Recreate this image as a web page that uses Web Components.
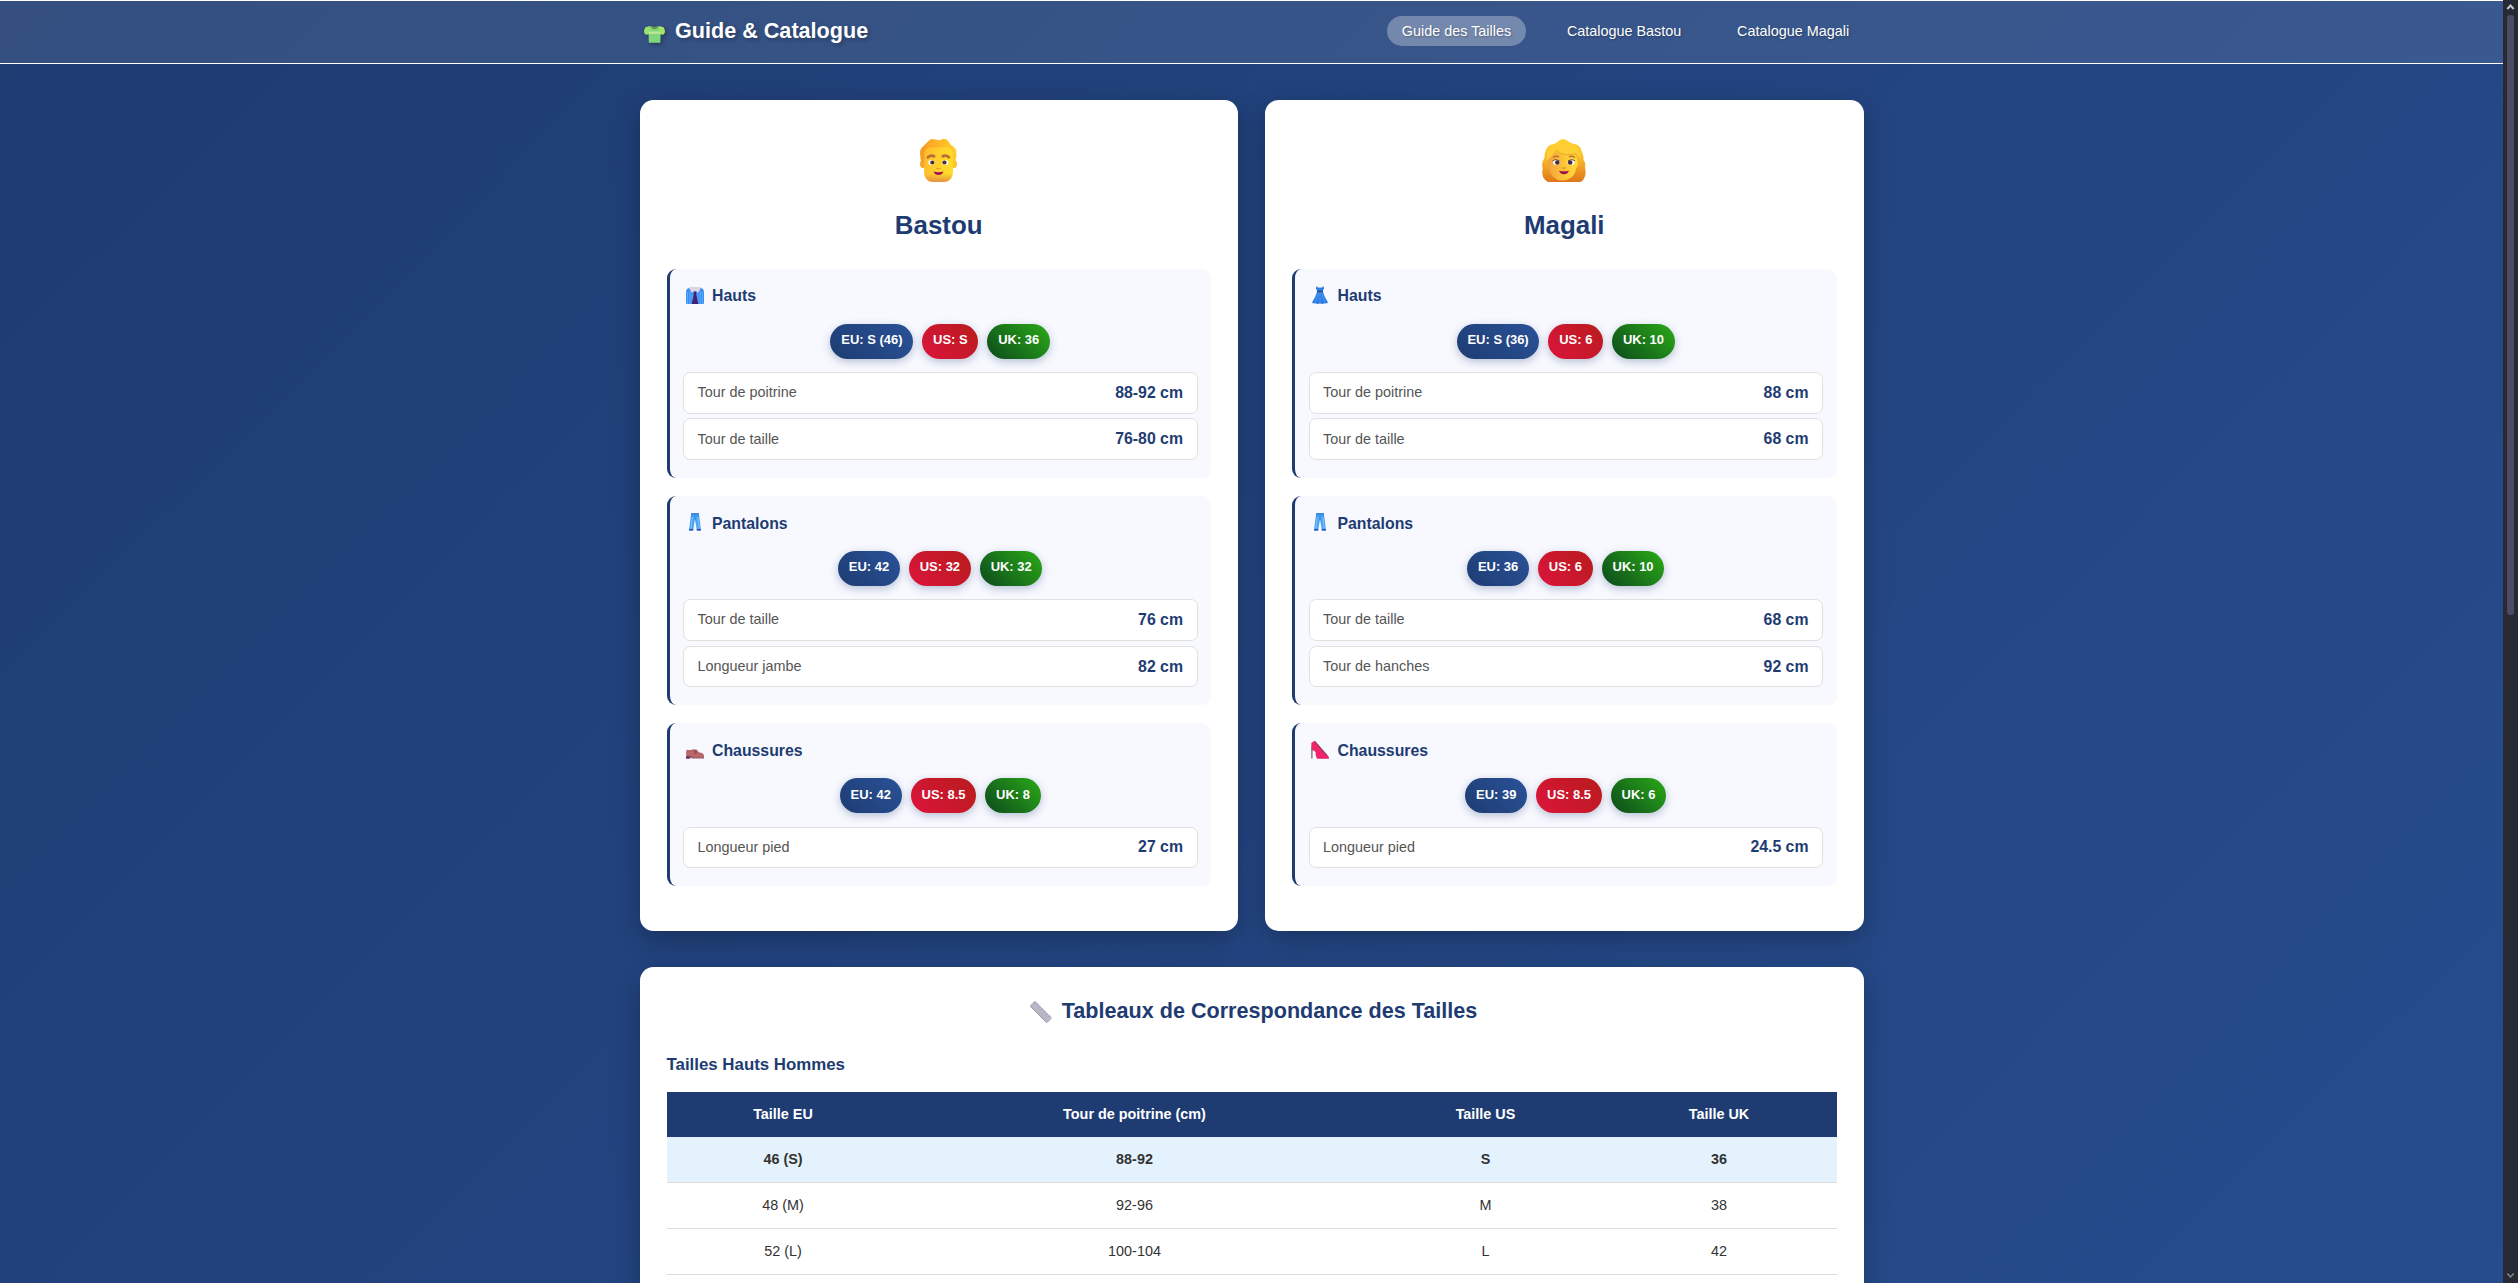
<!DOCTYPE html>
<html lang="fr">
<head>
<meta charset="utf-8">
<title>Guide &amp; Catalogue</title>
<style>
html,body{margin:0;height:100%;overflow:hidden}
body{font-family:"Liberation Sans",Arial,sans-serif;font-size:14.4px;line-height:1.6;color:#333}
</style>
</head>
<body>
<guide-app>
  <guide-header>
    <emoji-icon slot="logo" name="shirt" w="21" h="17"></emoji-icon>
    <span slot="brand">Guide &amp; Catalogue</span>
    <nav-link active>Guide des Tailles</nav-link>
    <nav-link>Catalogue Bastou</nav-link>
    <nav-link>Catalogue Magali</nav-link>
  </guide-header>
  <guide-main>
    <card-grid>
      <profile-card>
        <emoji-icon slot="avatar" name="man" w="37" h="43"></emoji-icon>
        <span slot="name">Bastou</span>
        <size-section>
          <emoji-icon slot="icon" name="necktie" w="18" h="17"></emoji-icon><span slot="title">Hauts</span>
          <size-badge slot="sizes" kind="eu">EU: S (46)</size-badge><size-badge slot="sizes" kind="us">US: S</size-badge><size-badge slot="sizes" kind="uk">UK: 36</size-badge>
          <measure-row label="Tour de poitrine">88-92 cm</measure-row>
          <measure-row label="Tour de taille">76-80 cm</measure-row>
        </size-section>
        <size-section>
          <emoji-icon slot="icon" name="jeans" w="12" h="18"></emoji-icon><span slot="title">Pantalons</span>
          <size-badge slot="sizes" kind="eu">EU: 42</size-badge><size-badge slot="sizes" kind="us">US: 32</size-badge><size-badge slot="sizes" kind="uk">UK: 32</size-badge>
          <measure-row label="Tour de taille">76 cm</measure-row>
          <measure-row label="Longueur jambe">82 cm</measure-row>
        </size-section>
        <size-section>
          <emoji-icon slot="icon" name="shoe" w="18" h="18"></emoji-icon><span slot="title">Chaussures</span>
          <size-badge slot="sizes" kind="eu">EU: 42</size-badge><size-badge slot="sizes" kind="us">US: 8.5</size-badge><size-badge slot="sizes" kind="uk">UK: 8</size-badge>
          <measure-row label="Longueur pied">27 cm</measure-row>
        </size-section>
      </profile-card>
      <profile-card>
        <emoji-icon slot="avatar" name="woman" w="44" h="43"></emoji-icon>
        <span slot="name">Magali</span>
        <size-section>
          <emoji-icon slot="icon" name="dress" w="16" h="18"></emoji-icon><span slot="title">Hauts</span>
          <size-badge slot="sizes" kind="eu">EU: S (36)</size-badge><size-badge slot="sizes" kind="us">US: 6</size-badge><size-badge slot="sizes" kind="uk">UK: 10</size-badge>
          <measure-row label="Tour de poitrine">88 cm</measure-row>
          <measure-row label="Tour de taille">68 cm</measure-row>
        </size-section>
        <size-section>
          <emoji-icon slot="icon" name="jeans" w="12" h="18"></emoji-icon><span slot="title">Pantalons</span>
          <size-badge slot="sizes" kind="eu">EU: 36</size-badge><size-badge slot="sizes" kind="us">US: 6</size-badge><size-badge slot="sizes" kind="uk">UK: 10</size-badge>
          <measure-row label="Tour de taille">68 cm</measure-row>
          <measure-row label="Tour de hanches">92 cm</measure-row>
        </size-section>
        <size-section>
          <emoji-icon slot="icon" name="heel" w="18" h="18"></emoji-icon><span slot="title">Chaussures</span>
          <size-badge slot="sizes" kind="eu">EU: 39</size-badge><size-badge slot="sizes" kind="us">US: 8.5</size-badge><size-badge slot="sizes" kind="uk">UK: 6</size-badge>
          <measure-row label="Longueur pied">24.5 cm</measure-row>
        </size-section>
      </profile-card>
    </card-grid>
    <conversion-card>
      <emoji-icon slot="icon" name="ruler" w="22" h="22"></emoji-icon>
      <span slot="title">Tableaux de Correspondance des Tailles</span>
      <size-table caption="Tailles Hauts Hommes" columns="Taille EU|Tour de poitrine (cm)|Taille US|Taille UK" rows="46 (S)|88-92|S|36;48 (M)|92-96|M|38;52 (L)|100-104|L|42"></size-table>
    </conversion-card>
  </guide-main>
  <scroll-track slot="scrollbar"></scroll-track>
</guide-app>
<script>
const define = (name, html, init) => {
  const t = document.createElement('template');
  t.innerHTML = html;
  customElements.define(name, class extends HTMLElement {
    constructor() {
      super();
      this.attachShadow({mode: 'open'}).append(t.content.cloneNode(true));
    }
    connectedCallback() { if (init) init(this, this.shadowRoot); }
  });
};

const ICONS = {
  shirt: ['0 0 21 17', `<path d="M6 .3 1.6 1.2Q.3 3 0 6l1.6 2.600 3-.3.2 7.600q0 .9.9.9h9.800q.9 0 .9-.9l.2-7.600 3 .3L21 6q-.3-3-1.600-4.800L15 .3q-4.500 1.500-9 0Z" fill="#7fd67b"/><path d="M6 .3 1.600 1.200Q.3 3 0 6l1.600 2.600 3-.3L6 3Z" fill="#9be06a"/><path d="m15 .3 4.400.9Q20.700 3 21 6l-1.600 2.600-3-.3L15 3Z" fill="#a5e35e"/><path d="M4.600 5.500h11.800v2.200H4.600Z" fill="#c3e69c"/><path d="M6.500.4Q10.500 6 14.500.4q-4 1.200-8 0Z" fill="#419f4b"/><path d="M7.500.4q3 2 6 0l-.5 1.300q-2.500 1.300-5 0Z" fill="#a98c37"/>`],
  necktie: ['0 0 18 17', `<path d="M3.500.8 1 2Q0 3.500 0 5.500V16q0 1 1 1h16q1 0 1-1V5.500Q18 3.500 17 2L14.500.8Z" fill="#398ff1"/><path d="M1.500 5v12M4 4v13M6.200 7v10M11.900 7v10M14.200 4v13M16.400 5v12" stroke="#67b2ff" stroke-width=".8"/><path d="M4.300 0h9.400l1 1.500-2.500 4.300L9 4.500 5.800 5.800 3.300 1.500Z" fill="#d8d5e4"/><path d="M7.500 4.500h3l-.4 2.300L12.300 17H5.700L7.900 6.800Z" fill="#461f70"/>`],
  jeans: ['0 0 12 18', `<path d="M2.200.3h7.600l.7 5L12 17.500H7.900L6.200 7.500h-.4L4.100 17.500H0L1.500 5.300Z" fill="#4ba3f5"/><path d="M2.200.3h7.600l.2 1.500H2Z" fill="#2f7fd4"/><path d="m3.300 4-1.300 11.500M8.800 4l1.300 11.500" stroke="#7cc2ff" stroke-width="1"/><path d="M6 2v5M2.400 3 4 3.800M9.600 3 8 3.800" stroke="#2b74c4" stroke-width=".6"/><path d="M.25 15.900h4.100l-.25 1.600H0ZM7.650 15.900h4.100l.25 1.600H7.900Z" fill="#2451a8"/>`],
  shoe: ['0 0 18 18', `<path d="M.5 8.700q3 .9 6-.2l4 .1 2.500 2.700 3.500 1q1.700 1 1.700 4.200H.3Q-.3 11.500.5 8.700Z" fill="#b96668"/><path d="M0 15.300h5.800l1 .9H18v1.400H6l-.5-1H4.700v1H0Z" fill="#8c5062"/><path d="M0 15.300h3.500v2.300H0Z" fill="#5d3b59"/><path d="m7.500 9 3 2.600-2.300.9M9.300 10.300l1.300-.8" fill="none" stroke="#76354a" stroke-width=".8"/>`],
  dress: ['0 0 16 18', `<path d="M4.500 0 5.600 1.300 8 1.800 10.400 1.300 11.500 0 12 2.500 10.700 5.200Q12.500 11 16 16.600l-1.800 1-1.600-.3-1.900.7-2.700-.6-2.700.6-1.900-.7-1.600.3L0 16.600Q3.500 11 5.300 5.200L4 2.500Z" fill="#2f7ce2"/><path d="M6.600 6.500 3.500 16.500M8 6.500v10M9.400 6.500l3.600 10" stroke="#4b9cff" stroke-width=".9"/><path d="M5.100 4.700h5.800v1.500H5.100Z" fill="#244a93"/>`],
  heel: ['0 0 18 18', `<path d="M.3 2 2.800.2h1.300L17.800 15.800v1.800H6.200Q4.500 16 4.600 11.500 4 9.700 2.600 9.400L.8 9.300Z" fill="#f4246b"/><path d="M3 .2h1.200L16.500 14.500 15.600 14.700Z" fill="#70404f"/><path d="M.3 3v14.500h1.200V9Z" fill="#6f5962"/><path d="M5.600 16.700h12.200v.9H6.200Z" fill="#c91f60"/>`],
  ruler: ['0 0 22 22', `<path d="M.4 4 4 .5q1-.8 2 .2L21.500 16.300q.6.7 0 1.500L18 21.500q-.9.700-1.700 0L.4 5.600Q-.1 4.800.4 4Z" fill="#bab7c6"/><path d="M.4 4.700 16.800 21.300l-.5.400L.4 5.800Z" fill="#9791a6"/><path d="m5.500 1-1.400 1.400M7.900 2.800 6.700 4M10.200 5.100 8.900 6.400M12.600 7.500l-1.300 1.300M15 9.900l-1.300 1.300M17.400 12.300l-1.300 1.300M19.800 14.700 18.500 16" stroke="#a47ed6" stroke-width="1"/><path d="M5.500.7 21.300 16.500" stroke="#cbc5da" stroke-width=".8"/>`],
  man: ['0 0 37 43', `<defs><linearGradient id="f" x1="0" x2="1" y1=".1" y2=".3"><stop stop-color="#ffb92f"/><stop offset=".6" stop-color="#ffd42c"/><stop offset="1" stop-color="#ffdc27"/></linearGradient><linearGradient id="s" y2="1" x2="0"><stop offset=".75" stop-color="#e48a44" stop-opacity="0"/><stop offset="1" stop-color="#df8345" stop-opacity=".85"/></linearGradient><linearGradient id="h"><stop stop-color="#f39a20"/><stop offset=".5" stop-color="#ffb528"/><stop offset="1" stop-color="#ffcf31"/></linearGradient></defs><ellipse cx="3" cy="25" rx="3" ry="4" fill="#f8a52e"/><ellipse cx="34" cy="25" rx="3" ry="4" fill="#ffc22c"/><path d="M1 22Q-.6 13 .6 10.500 2 8 5 5.500L9 1.500q2.500-2.200 6-1l4 .7 4-1.100q3.500-.6 5 1.600l3 4.200q4.700 2.600 5.300 5.600.6 5-.7 10.500l-4 3H5Z" fill="url(#h)"/><path d="M4.500 14q.5-4.700 5-5.500h17.500q5 .5 5.500 5.500L33 33q-.4 9.400-9 10h-11q-8.600-.6-9-10Z" fill="url(#f)"/><path d="M4.500 14q.5-4.700 5-5.500h17.500q5 .5 5.500 5.500L33 33q-.4 9.400-9 10h-11q-8.600-.6-9-10Z" fill="url(#s)"/><path d="M8 18.200q3-2.700 6-.9M22.800 17.300q3.200-1.800 6 .9" fill="none" stroke="#b96c35" stroke-width="2.800" stroke-linecap="round"/><ellipse cx="11.500" cy="23.400" rx="3.100" ry="2.500" fill="#fff"/><ellipse cx="25.300" cy="23.400" rx="3.100" ry="2.500" fill="#fff"/><circle cx="12.300" cy="23.500" r="2.100" fill="#452f36"/><circle cx="24.500" cy="23.500" r="2.100" fill="#452f36"/><path d="M16.500 29q2 1.600 4 0" fill="none" stroke="#f09a28" stroke-width="1.300"/><path d="M13.500 32.500q5 1.500 10 0-1.400 3.500-5 3.500t-5-3.500Z" fill="#a30f50"/>`],
  woman: ['0 0 44 43', `<defs><linearGradient id="a" y2="1" x2="0"><stop stop-color="#ffd637"/><stop offset=".5" stop-color="#f8b528"/><stop offset="1" stop-color="#df761a"/></linearGradient><linearGradient id="b" x1="0" x2="1"><stop stop-color="#f2a13e"/><stop offset=".6" stop-color="#ffc936"/><stop offset="1" stop-color="#ffd93b"/></linearGradient></defs><path d="M15.500 3Q21-3 27 3l3 1.500Q39 5 40 13q2 5 1.500 8 2.500 3 1.500 7 2.500 11-4.500 15H6Q-1.500 39 .7 29-1 24 2.500 19q0-5 1.500-8Q6 5 12 5Z" fill="url(#a)"/><path d="M5.500 22Q6 14 14 11l16 2q6 5 6 12-.6 3.600-2 4-1 11-13.500 12.500Q9 41 7.500 30 5 28 5.500 22Z" fill="url(#b)"/><path d="M14 5q5-7 13-2l7 4q4.500 3 5 13-3-4-5.500-5.500Q20 17 14 11 10 17 5 22 3 8 14 5Z" fill="#ffce32"/><path d="M14.500 11.500q7 6.500 20 3" fill="none" stroke="#e9a32c" stroke-width=".8"/><path d="M11 18.500q3-2 6-.7M27 17.800q3-1.300 6 .7" stroke="#ba7031" stroke-width="1.500" fill="none"/><ellipse cx="14.500" cy="23.300" rx="3.500" ry="2.800" fill="#fff"/><ellipse cx="29" cy="23.300" rx="3.500" ry="2.800" fill="#fff"/><circle cx="15.300" cy="23.500" r="2.300" fill="#442e39"/><circle cx="28.200" cy="23.500" r="2.300" fill="#442e39"/><path d="M10.500 21.700q3-2.300 7 0M26 21.700q4-2.300 7 0" fill="none" stroke="#51323b" stroke-width=".8"/><path d="M20 28.500q2 1.500 4 0" fill="none" stroke="#e59432" stroke-width="1.300"/><path d="M17 31.700q5 1.300 10 0-1.400 3.500-5 3.500t-5-3.500Z" fill="#a11050"/>`]
};
define('emoji-icon', `<style>:host{display:block;flex:none}svg{display:block;overflow:visible}</style>`, (el, root) => {
  const [box, art] = ICONS[el.getAttribute('name')];
  const holder = document.createElement('div');
  holder.innerHTML = `<svg viewBox="${box}" width="${el.getAttribute('w')}" height="${el.getAttribute('h')}" aria-hidden="true">${art}</svg>`;
  root.append(holder.firstChild);
});

define('guide-app', `<style>
:host{display:flex;height:1283px;overflow:hidden}
.page{flex:1;min-width:0;height:2680px;background:linear-gradient(135deg,#1e3c72 0%,#2a5298 100%)}
</style><div class="page"><slot></slot></div><slot name="scrollbar"></slot>`);

define('guide-header', `<style>
:host{display:block;box-sizing:border-box;height:64px;background:rgba(255,255,255,.1);border-top:1px solid #fff;border-bottom:1px solid #fff}
.bar{width:1224px;height:61.500px;margin:0 auto;display:flex;align-items:center;justify-content:space-between}
.logo{display:flex;align-items:center;gap:6px;color:#fff;font-size:21.6px;font-weight:700;text-shadow:2px 2px 4px rgba(0,0,0,.3)}
.ico{width:29.500px;display:flex;justify-content:center;padding-top:5px;filter:drop-shadow(2px 2px 2px rgba(0,0,0,.3))}
nav{display:flex;gap:27px;padding-bottom:1.500px}
</style><div class="bar"><div class="logo"><div class="ico"><slot name="logo"></slot></div><slot name="brand"></slot></div><nav><slot></slot></nav></div>`);

define('nav-link', `<style>
:host{display:block;box-sizing:border-box;height:30px;padding:0 14.400px;line-height:31px;border-radius:18px;color:#fff;font-size:14.400px;text-shadow:1px 1px 2px rgba(0,0,0,.3)}
:host([active]){background:rgba(255,255,255,.3)}
</style><slot></slot>`);

define('guide-main', `<style>:host{display:flex;flex-direction:column;gap:36px;width:1224px;margin:0 auto;padding-top:36px}</style><slot></slot>`);
define('card-grid', `<style>:host{display:grid;grid-template-columns:1fr 1fr;gap:27px}</style><slot></slot>`);

define('profile-card', `<style>
:host{display:block;background:#fff;border-radius:13.500px;padding:27px;box-shadow:0 9px 27px rgba(0,0,0,.25)}
.avatar{box-sizing:border-box;height:69.120px;padding-bottom:2px;display:flex;align-items:center;justify-content:center;margin-bottom:9px}
h2{margin:0 0 22.500px;height:41.400px;text-align:center;color:#1e3c72;font-size:25.920px;line-height:41.470px}
</style><div class="avatar"><slot name="avatar"></slot></div><h2><slot name="name"></slot></h2><slot></slot>`);

define('size-section', `<style>
:host{display:block;background:#f8f9ff;border-left:3px solid #1e3c72;border-radius:9px;padding:13.500px;margin-bottom:18px}
h3{box-sizing:border-box;display:flex;align-items:center;margin:0 0 13.500px;height:27.650px;padding-bottom:.5px;color:#1e3c72;font-size:15.840px}
.ico{width:23px;margin-right:6px;padding-bottom:1.500px;display:flex;justify-content:center}
.sizes{display:flex;justify-content:center;gap:9px;margin-bottom:13.500px}
</style><h3><span class="ico"><slot name="icon"></slot></span><slot name="title"></slot></h3><div class="sizes"><slot name="sizes"></slot></div><slot></slot>`);

define('size-badge', `<style>
:host{display:block;box-sizing:border-box;height:35.140px;padding:6.700px 10.800px 0;border-radius:18px;color:#fff;font-size:12.960px;line-height:20.740px;font-weight:700;box-shadow:0 2.700px 9px rgba(30,60,114,.3)}
:host([kind=eu]){background:linear-gradient(45deg,#1e3c72,#2a5298)}
:host([kind=us]){background:linear-gradient(45deg,#dc143c,#b71c1c)}
:host([kind=uk]){background:linear-gradient(45deg,#0d4a1c,#2aaa18)}
</style><slot></slot>`);

define('measure-row', `<style>
:host{display:flex;box-sizing:border-box;height:41.700px;justify-content:space-between;align-items:center;background:#fff;border:1px solid #e0e0e0;border-radius:7.200px;padding:0 13.500px .5px;margin-bottom:4.500px}
.label{color:#555;font-size:14.400px;line-height:23.040px}
.value{color:#1e3c72;font-size:15.840px;line-height:25.340px;font-weight:700}
</style><span class="label"></span><span class="value"><slot></slot></span>`, (el, root) => {
  root.querySelector('.label').textContent = el.getAttribute('label');
});

define('conversion-card', `<style>
:host{display:block;background:#fff;border-radius:13.500px;padding:27px;box-shadow:0 9px 27px rgba(0,0,0,.25)}
h2{display:flex;align-items:center;justify-content:center;margin:0 0 22.500px;height:34.800px;color:#1e3c72;font-size:21.600px;line-height:34.560px}
.ico{width:30px;margin-right:6px;display:flex;justify-content:center}
</style><h2><span class="ico"><slot name="icon"></slot></span><slot name="title"></slot></h2><slot></slot>`);

define('size-table', `<style>
:host{display:block}
h3{margin:0 0 13.500px;height:26.960px;color:#1e3c72;font-size:16.850px;line-height:26.960px}
table{width:100%;table-layout:fixed;border-collapse:separate;border-spacing:0}
th,td{box-sizing:border-box;padding:0 0 0 1px;height:46px;text-align:center;font-size:14.400px;line-height:23px}
th{height:45px;background:#1e3c72;color:#fff;font-weight:700}
td{border-bottom:1px solid #ddd}
tbody tr:first-child td{background:#e3f2fd;font-weight:700;padding-top:1px}
</style><h3></h3><table><colgroup><col style="width:232px"><col style="width:471px"><col style="width:231px"><col style="width:236px"></colgroup><thead></thead><tbody></tbody></table>`, (el, root) => {
  root.querySelector('h3').textContent = el.getAttribute('caption');
  const line = (text, tag) => '<tr>' + text.split('|').map(c => `<${tag}>${c}</${tag}>`).join('') + '</tr>';
  root.querySelector('thead').innerHTML = line(el.getAttribute('columns'), 'th');
  root.querySelector('tbody').innerHTML = el.getAttribute('rows').split(';').map(r => line(r, 'td')).join('');
});

define('scroll-track', `<style>
:host{display:flex;flex-direction:column;align-items:center;flex:none;width:15px;height:1283px;background:#272a35}
svg{display:block;flex:none}
.thumb{width:7px;height:600px;border-radius:3px;background:#4b4c63}
.rest{flex:1}
</style><svg width="15" height="15" viewBox="0 0 15 15"><path d="m4.300 9 3.200-3.500L10.700 9" fill="none" stroke="#c6c7cc" stroke-width="2"/></svg><div class="thumb"></div><div class="rest"></div><svg width="15" height="15" viewBox="0 0 15 15"><path d="m4.300 5.500 3.200 3.500 3.200-3.500" fill="none" stroke="#85868d" stroke-width="1.500"/></svg>`);
</script>
</body>
</html>
